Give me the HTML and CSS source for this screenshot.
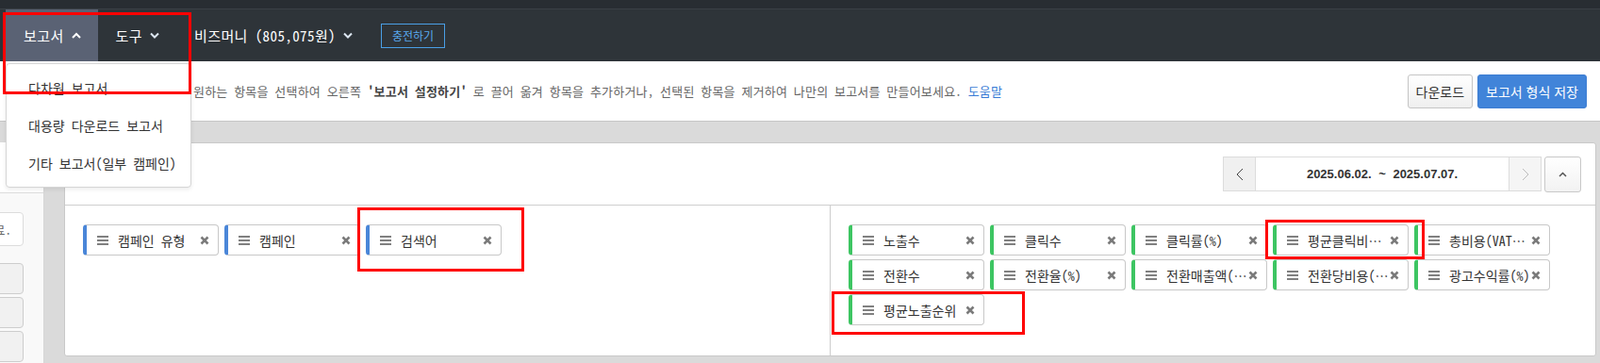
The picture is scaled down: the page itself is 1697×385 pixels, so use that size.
FILE: index.html
```html
<!DOCTYPE html>
<html lang="ko">
<head>
    <meta charset="UTF-8">
    <meta name="viewport" content="width=device-width, initial-scale=1.0">
    <title>다차원 보고서</title>
    <link rel="stylesheet" href="styles.css">
</head>
<body>
    <header class="gnb">
        <div class="gnb-top"></div>
        <nav class="gnb-menu">
            <div class="gnb-item active">보고서
                <svg class="chev" viewBox="0 0 10 7"><polyline points="1,6 5,2 9,6" /></svg>
            </div>
            <div class="gnb-item">도구
                <svg class="chev chev-down" viewBox="0 0 10 7"><polyline points="1,1.5 5,5.5 9,1.5" /></svg>
            </div>
            <div class="gnb-item">비즈머니 (805,075원)
                <svg class="chev chev-down" viewBox="0 0 10 7"><polyline points="1,1.5 5,5.5 9,1.5" /></svg>
            </div>
            <button class="charge-btn">충전하기</button>
        </nav>

        <ul class="gnb-dropdown">
            <li>다차원 보고서</li>
            <li>대용량 다운로드 보고서</li>
            <li>기타 보고서(일부 캠페인)</li>
        </ul>
    </header>

    <section class="guide-bar">
        <p class="guide-text"><span class="guide-lead">보고서에 표시할 항목 중 </span>원하는 항목을 선택하여 오른쪽 <strong>'보고서 설정하기'</strong> 로 끌어 옮겨 항목을 추가하거나, 선택된 항목을 제거하여 나만의 보고서를 만들어보세요. <a href="#">도움말</a></p>
        <div class="guide-actions">
            <button class="btn">다운로드</button>
            <button class="btn btn-primary">보고서 형식 저장</button>
        </div>
    </section>

    <main class="workspace">
        <aside class="side">
            <div class="side-head"></div>
            <div class="side-body">
                <div class="side-note">항목 설정을 완료.</div>
                <div class="side-btn"></div>
                <div class="side-btn"></div>
                <div class="side-btn"></div>
            </div>
        </aside>

        <section class="report-panel">
            <div class="panel-head">
                <div class="date-nav">
                    <span class="date-arrow">
                        <svg width="8" height="14" viewBox="0 0 8 14"><polyline points="7,1 1,7 7,13" /></svg>
                    </span>
                    <span class="date-range">2025.06.02. ~ 2025.07.07.</span>
                    <span class="date-arrow disabled">
                        <svg width="8" height="14" viewBox="0 0 8 14"><polyline points="1,1 7,7 1,13" /></svg>
                    </span>
                </div>
                <button class="fold-btn">
                    <svg width="9" height="6" viewBox="0 0 9 6"><polyline points="1,5 4.5,1.5 8,5" /></svg>
                </button>
            </div>

            <div class="panel-body">
                <div class="zone" id="dimZone"></div>
                <div class="zone" id="metricZone"></div>
            </div>
        </section>
    </main>

    <div class="mark mark-menu"></div>
    <div class="mark mark-keyword"></div>
    <div class="mark mark-cpc"></div>
    <div class="mark mark-rank"></div>

    <script>
        const dims = ['캠페인 유형', '캠페인', '검색어'];
        const metrics = [
            '노출수', '클릭수', '클릭률(%)', '평균클릭비용(VAT포함,원)', '총비용(VAT포함,원)',
            '전환수', '전환율(%)', '전환매출액(원)', '전환당비용(원)', '광고수익률(%)',
            '평균노출순위'
        ];

        const grip = '<svg class="tag-grip" viewBox="0 0 12 10"><rect y="0" width="12" height="2"/><rect y="4" width="12" height="2"/><rect y="8" width="12" height="2"/></svg>';
        const del = '<svg class="tag-del" viewBox="0 0 10 10"><path d="M1.5 1.5l7 7M8.5 1.5l-7 7"/></svg>';

        function renderTags(zone, list, type) {
            zone.innerHTML = list.map(name =>
                `<div class="tag ${type}">${grip}<span class="tag-name">${name}</span>${del}</div>`
            ).join('');
        }

        renderTags(document.getElementById('dimZone'), dims, 'tag-dim');
        renderTags(document.getElementById('metricZone'), metrics, 'tag-metric');
    </script>
</body>
</html>
```

FILE: styles.css
```css
* {
    box-sizing: border-box;
}

body {
    margin: 0;
    height: 385px;
    overflow: hidden;
    position: relative;
    background: #dadada;
    font-family: "Liberation Sans", "Noto Sans CJK KR", sans-serif;
    color: #333;
}

/* half-width latin, like the old korean system fonts */
.gnb-item,
.gnb-dropdown,
.guide-text,
.side-note,
.tag {
    font-family: "Noto Sans CJK KR", sans-serif;
    font-feature-settings: "hwid" 1;
}

/* top navigation */
.gnb {
    position: relative;
    background: #2e3439;
}

.gnb-top {
    height: 10px;
    background: #282d32;
    border-bottom: 1px solid #3a4046;
}

.gnb-menu {
    height: 55px;
    display: flex;
    align-items: center;
    padding-left: 6px;
}

.gnb-item {
    height: 100%;
    display: flex;
    align-items: center;
    gap: 8px;
    padding: 0 18px 0 19px;
    color: #fff;
    font-size: 15px;
    letter-spacing: 0.4px;
}

.gnb-item.active {
    background: #5a6274;
}

.chev {
    width: 10px;
    height: 7px;
}

.chev polyline {
    fill: none;
    stroke: #fff;
    stroke-width: 2;
}

.chev-down polyline {
    stroke: #dde7f2;
}

.charge-btn {
    margin-left: 12px;
    width: 68px;
    height: 26px;
    padding: 0;
    background: transparent;
    border: 1px solid #4a9fe6;
    color: #59a9ef;
    font-family: "Liberation Sans", "Noto Sans CJK KR", sans-serif;
    font-size: 12px;
}

.gnb-dropdown {
    position: absolute;
    top: 67px;
    left: 6px;
    width: 197px;
    margin: 0;
    padding: 5px 0;
    list-style: none;
    background: #fff;
    border: 1px solid #d5d5d5;
    border-radius: 4px;
    box-shadow: 0 2px 4px rgba(0, 0, 0, 0.08);
    z-index: 10;
}

.gnb-dropdown li {
    height: 40px;
    line-height: 40px;
    padding-left: 23px;
    font-size: 14px;
    color: #333;
}

/* guide bar */
.guide-bar {
    height: 64px;
    display: flex;
    align-items: center;
    justify-content: space-between;
    padding: 0 14px 0 60px;
    background: #fff;
    border-bottom: 1px solid #c6c6c6;
}

.guide-text {
    margin: 0;
    font-size: 13px;
    letter-spacing: 0.2px;
    color: #666;
    white-space: nowrap;
}

.guide-lead {
    display: inline-block;
    width: 145px;
    overflow: hidden;
    vertical-align: bottom;
}

.guide-text strong {
    color: #444;
}

.guide-text a {
    color: #3a7bd5;
    text-decoration: none;
}

.guide-actions {
    display: flex;
    gap: 5px;
}

.btn {
    height: 36px;
    padding: 0 8px;
    border: 1px solid #c5c5c5;
    border-radius: 3px;
    background: linear-gradient(#fff, #efefef);
    color: #333;
    font-family: "Liberation Sans", "Noto Sans CJK KR", sans-serif;
    font-size: 14px;
}

.btn-primary {
    background: #4184d9;
    border-color: #3d7dd2;
    color: #fff;
}

/* workspace */
.workspace {
    height: 256px;
    padding-top: 22px;
    display: flex;
    align-items: flex-start;
}

.side {
    width: 47px;
    height: 100%;
    margin-right: 21px;
    display: flex;
    flex-direction: column;
    overflow: hidden;
    background: #f9f9f9;
    border-right: 1px solid #d6d6d6;
}

.side-head {
    height: 54px;
    flex-shrink: 0;
    background: #fff;
    border-bottom: 1px solid #dcdcdc;
}

.side-body {
    display: flex;
    flex-direction: column;
    align-items: flex-end;
    gap: 3px;
    padding: 20px 21px 0 0;
}

.side-note {
    width: 200px;
    height: 36px;
    flex-shrink: 0;
    display: flex;
    align-items: center;
    justify-content: flex-end;
    padding-right: 12px;
    margin-bottom: 15px;
    background: #fff;
    border: 1px solid #dcdcdc;
    border-radius: 4px;
    font-size: 13px;
    color: #666;
    white-space: nowrap;
}

.side-btn {
    width: 200px;
    height: 33px;
    flex-shrink: 0;
    background: #f1f1f1;
    border: 1px solid #cdcdcd;
    border-radius: 4px;
}

.report-panel {
    flex: 1;
    height: 227px;
    margin-right: 4px;
    display: flex;
    flex-direction: column;
    background: #fff;
    border: 1px solid #c9c9c9;
    border-radius: 3px;
}

.panel-head {
    height: 66px;
    flex-shrink: 0;
    display: flex;
    align-items: center;
    justify-content: flex-end;
    gap: 3px;
    padding-right: 15px;
    border-bottom: 1px solid #cfcfcf;
}

.date-nav {
    height: 37px;
    display: flex;
    border: 1px solid #dcdcdc;
}

.date-arrow {
    width: 33px;
    display: flex;
    align-items: center;
    justify-content: center;
    background: #f0f0f0;
}

.date-arrow polyline {
    fill: none;
    stroke: #444;
    stroke-width: 1;
}

.date-arrow.disabled {
    background: #f5f5f5;
}

.date-arrow.disabled polyline {
    stroke: #bbb;
}

.date-range {
    width: 270px;
    display: flex;
    align-items: center;
    justify-content: center;
    border-left: 1px solid #dcdcdc;
    border-right: 1px solid #dcdcdc;
    font-size: 13px;
    font-weight: bold;
    color: #333;
    word-spacing: 4px;
}

.fold-btn {
    width: 39px;
    height: 38px;
    padding: 0;
    display: flex;
    align-items: center;
    justify-content: center;
    background: linear-gradient(#fff, #f2f2f2);
    border: 1px solid #c8c8c8;
    border-radius: 3px;
}

.fold-btn polyline {
    fill: none;
    stroke: #555;
    stroke-width: 1.5;
}

.panel-body {
    flex: 1;
    display: flex;
}

.zone {
    flex: 1;
    display: flex;
    flex-wrap: wrap;
    align-content: flex-start;
    gap: 4px 6px;
    padding: 20px 19px;
}

.zone + .zone {
    border-left: 1px solid #cccccc;
}

/* draggable tags */
.tag {
    width: 144px;
    height: 33px;
    display: flex;
    align-items: center;
    padding: 0 9px 0 11px;
    background: #fff;
    border: 1px solid #c8c8c8;
    border-left: 4px solid #4a86d8;
    border-radius: 4px;
    font-size: 14px;
    color: #333;
}

.tag-metric {
    border-left-color: #3dc562;
}

.tag-grip {
    width: 12px;
    height: 10px;
    flex-shrink: 0;
    margin-right: 10px;
    fill: #808080;
}

.tag-name {
    width: 86px;
    overflow: hidden;
    white-space: nowrap;
    text-overflow: ellipsis;
}

.tag-del {
    width: 10px;
    height: 10px;
    flex-shrink: 0;
    margin-left: 1px;
}

.tag-del path {
    stroke: #7a7a7a;
    stroke-width: 2.6;
}

/* review marks drawn on the capture */
.mark {
    position: absolute;
    border: 3px solid #ff0000;
    z-index: 20;
}

.mark-menu {
    left: 3px;
    top: 13px;
    width: 200px;
    height: 87px;
}

.mark-keyword {
    left: 379px;
    top: 220px;
    width: 177px;
    height: 68px;
}

.mark-cpc {
    left: 1342px;
    top: 233px;
    width: 169px;
    height: 42px;
}

.mark-rank {
    left: 882px;
    top: 309px;
    width: 205px;
    height: 46px;
}
```
